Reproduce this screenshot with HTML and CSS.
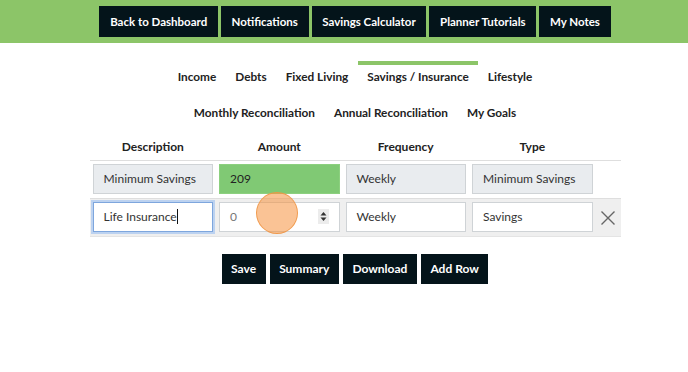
FILE: index.html
```html
<!DOCTYPE html>
<html lang="en">
<head>
    <meta charset="UTF-8">
    <meta name="viewport" content="width=device-width, initial-scale=1.0">
    <title>Savings / Insurance</title>
    <link rel="stylesheet" href="styles.css">
</head>
<body>
    <!-- Top Navigation -->
    <div class="topbar">
        <div class="page">
            <a class="btn" href="#">Back to Dashboard</a>
            <a class="btn" href="#">Notifications</a>
            <a class="btn" href="#">Savings Calculator</a>
            <a class="btn" href="#">Planner Tutorials</a>
            <a class="btn" href="#">My Notes</a>
        </div>
    </div>

    <div class="page">
        <!-- Section Tabs -->
        <div class="tabs">
            <a class="tab" href="#">Income</a>
            <a class="tab" href="#">Debts</a>
            <a class="tab" href="#">Fixed Living</a>
            <a class="tab active" href="#">Savings / Insurance</a>
            <a class="tab" href="#">Lifestyle</a>
        </div>
        <div class="tabs">
            <a class="tab" href="#">Monthly Reconciliation</a>
            <a class="tab" href="#">Annual Reconciliation</a>
            <a class="tab" href="#">My Goals</a>
        </div>

        <!-- Savings Table -->
        <table class="budget-table">
            <thead>
                <tr>
                    <th>Description</th>
                    <th>Amount</th>
                    <th>Frequency</th>
                    <th>Type</th>
                    <th class="col-remove"></th>
                </tr>
            </thead>
            <tbody>
                <tr>
                    <td><div class="field locked">Minimum Savings</div></td>
                    <td><div class="field filled">209</div></td>
                    <td><div class="field locked">Weekly</div></td>
                    <td><div class="field locked">Minimum Savings</div></td>
                    <td></td>
                </tr>
                <tr class="editing">
                    <td><div class="field focused">Life Insurance<span class="caret"></span></div></td>
                    <td>
                        <div class="field number">
                            <span class="placeholder">0</span>
                            <span class="spinner">
                                <svg width="11" height="15" viewBox="0 0 11 15">
                                    <polygon points="5.5,3 8.5,6.5 2.5,6.5" fill="#333"/>
                                    <polygon points="5.5,12 8.5,8.5 2.5,8.5" fill="#333"/>
                                </svg>
                            </span>
                            <span class="click-marker"></span>
                        </div>
                    </td>
                    <td><div class="field">Weekly</div></td>
                    <td><div class="field">Savings</div></td>
                    <td class="col-remove">
                        <svg width="16" height="16" viewBox="0 0 16 16">
                            <path d="M1.5 1.5 L14.5 14.5 M14.5 1.5 L1.5 14.5" stroke="#666" stroke-width="1.4" fill="none"/>
                        </svg>
                    </td>
                </tr>
            </tbody>
        </table>

        <!-- Actions -->
        <div class="actions">
            <button class="btn">Save</button>
            <button class="btn">Summary</button>
            <button class="btn">Download</button>
            <button class="btn">Add Row</button>
        </div>
    </div>
</body>
</html>
```

FILE: styles.css
```css
body {
    font-family: Lato, "Open Sans", sans-serif;
    margin: 0;
    padding: 0;
    color: #222;
    background: #fff;
}

.page {
    padding-left: 22px;
    text-align: center;
}

/* Top navigation */
.topbar {
    background: #8cc568;
    padding: 6px 0;
}

.topbar .page {
    display: flex;
    justify-content: center;
    gap: 3px;
}

.btn {
    display: inline-block;
    background: #04141a;
    color: #fff;
    font-family: Lato, sans-serif;
    font-size: 12px;
    font-weight: bold;
    line-height: 31px;
    padding: 0 11.5px;
    border: none;
    text-decoration: none;
    white-space: nowrap;
}

.topbar .btn {
    font-size: 11.5px;
    padding: 0 10.7px;
}

/* Tabs */
.tabs {
    display: flex;
    justify-content: center;
}

.tabs:first-child {
    margin-top: 18px;
}

.tab {
    font-size: 11.8px;
    font-weight: bold;
    line-height: 16px;
    color: #222;
    text-decoration: none;
    padding: 4px 9.5px 12px;
    border-top: 4px solid transparent;
    white-space: nowrap;
}

.tab.active {
    border-top-color: #8cc568;
}

/* Table */
.budget-table {
    border-collapse: collapse;
    margin: 0 auto;
    font-size: 12px;
}

.budget-table th {
    width: 126.5px;
    padding: 6px 0 5px;
    line-height: 16px;
    font-weight: bold;
    color: #222;
}

.budget-table th.col-remove {
    width: 25px;
}

.budget-table tbody tr {
    border-top: 1px solid #dedede;
}

.budget-table td {
    padding: 3px 3px 4px;
}

.budget-table tr.editing {
    background: #efefef;
    border-bottom: 1px solid #e4e4e4;
}

.budget-table td.col-remove {
    padding: 0;
    text-align: center;
    vertical-align: middle;
}

.budget-table td.col-remove svg {
    display: block;
    margin: 0 auto 0 4px;
}

.field {
    position: relative;
    box-sizing: border-box;
    height: 30px;
    padding: 0 10px;
    line-height: 28px;
    text-align: left;
    color: #333;
    background: #fff;
    border: 1px solid #cfd3d6;
    white-space: nowrap;
}

.field.locked {
    background: #e9ecef;
}

.field.filled {
    background: #80c974;
    border-color: #8cd07f;
    color: #222;
}

.field.focused {
    border-color: #7ea6dd;
    box-shadow: 0 0 0 2px #bcd2f0;
}

.caret {
    display: inline-block;
    width: 1px;
    height: 15px;
    background: #111;
    vertical-align: middle;
    margin-top: -2px;
}

.placeholder {
    color: #777;
}

.spinner {
    position: absolute;
    right: 10px;
    top: 6px;
    width: 11px;
    height: 15px;
    background: #ececec;
}

.spinner svg {
    display: block;
}

/* click highlight over the amount field */
.click-marker {
    position: absolute;
    left: 36px;
    top: -11px;
    width: 40px;
    height: 40px;
    border-radius: 50%;
    background: rgba(246, 146, 62, 0.55);
    border: 1px solid rgba(240, 150, 70, 0.9);
}

/* Actions */
.actions {
    display: flex;
    justify-content: center;
    gap: 4px;
    margin-top: 17px;
}

.actions .btn {
    line-height: 30px;
    padding: 0 9.5px;
}
```
